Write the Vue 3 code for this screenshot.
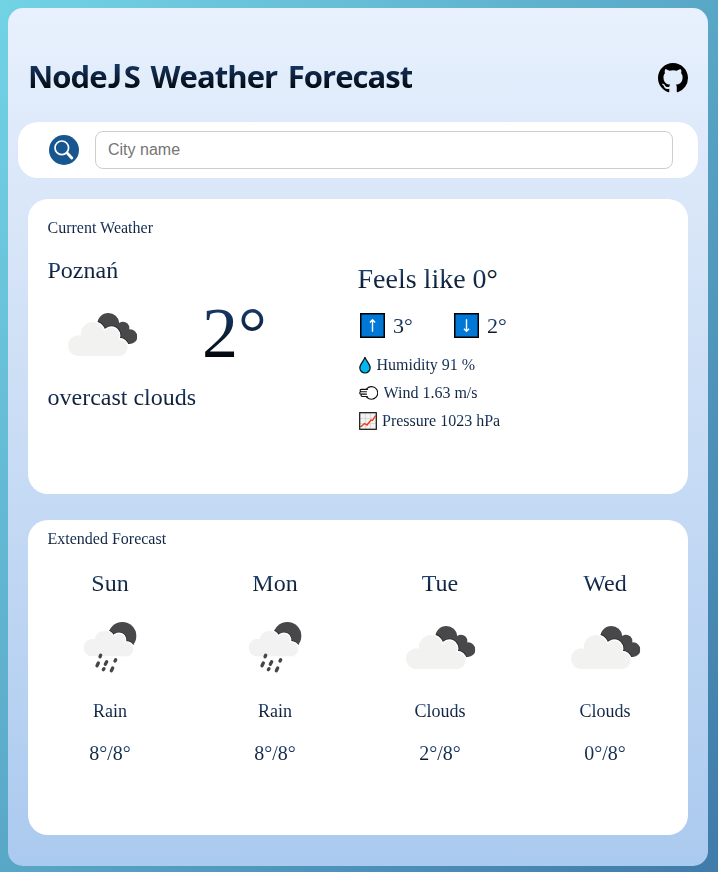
<script setup>
const days = [
  { name: 'Sun', icon: 'rain', text: 'Rain', temp: '8°/8°' },
  { name: 'Mon', icon: 'rain', text: 'Rain', temp: '8°/8°' },
  { name: 'Tue', icon: 'clouds', text: 'Clouds', temp: '2°/8°' },
  { name: 'Wed', icon: 'clouds', text: 'Clouds', temp: '0°/8°' },
]
</script>

<template>
  <div class="page">
    <svg class="sprite" width="0" height="0" aria-hidden="true">
      <defs>
        <clipPath id="dark-cloud">
          <circle cx="144" cy="72" r="33" />
          <circle cx="188" cy="84" r="19" />
          <circle cx="209" cy="110" r="22" />
          <path d="M118 60L144 50L188 75L212 105L205 132L150 120Z" />
        </clipPath>
        <clipPath id="dark-sun"><circle cx="141" cy="228" r="42" /></clipPath>
        <path id="front-cloud" d="M54 168A31 31 0 1 1 62 107A35 35 0 0 1 132 96A22 22 0 0 1 174 117A25 25 0 1 1 178 168Z" />
        <path id="rain-cloud" d="M53 289A26 26 0 1 1 58 238A30 30 0 0 1 115 231A18 18 0 0 1 147 248A21 21 0 1 1 150 289Z" />
        <symbol id="clouds" viewBox="-25 -48 300 300">
          <g clip-path="url(#dark-cloud)">
            <rect x="100" y="30" width="140" height="110" fill="#48484a" />
            <use href="#front-cloud" fill="none" stroke="#2a2a2c" stroke-width="13" />
          </g>
          <use href="#front-cloud" fill="#fff" stroke="#fff" stroke-width="8" />
          <use href="#front-cloud" fill="#f2f2f1" />
        </symbol>
        <symbol id="rain" viewBox="-46 111 300 300">
          <g clip-path="url(#dark-sun)">
            <rect x="90" y="180" width="100" height="100" fill="#48484a" />
            <use href="#rain-cloud" fill="none" stroke="#2a2a2c" stroke-width="12" />
          </g>
          <use href="#rain-cloud" fill="#fff" stroke="#fff" stroke-width="8" />
          <use href="#rain-cloud" fill="#f2f2f2" />
          <path d="M76 286l-2 4M69 309l-4 8M94 305l-4 8M121 299l-2 4M86 326l-2 3M112 324l-4 8" fill="none" stroke="#454547" stroke-width="10" stroke-linecap="round" />
        </symbol>
      </defs>
    </svg>

    <main class="panel">
      <header class="header">
        <h1 class="title ink">Node<span class="cap">J</span>S Weather Forecast</h1>
        <svg class="github" viewBox="0 0 16 16"><path d="M8 0C3.58 0 0 3.58 0 8c0 3.54 2.29 6.53 5.47 7.59.4.07.55-.17.55-.38 0-.19-.01-.82-.01-1.49-2.01.37-2.53-.49-2.69-.94-.09-.23-.48-.94-.82-1.13-.28-.15-.68-.52-.01-.53.63-.01 1.08.58 1.23.82.72 1.21 1.87.87 2.33.66.07-.52.28-.87.51-1.07-1.78-.2-3.64-.89-3.64-3.95 0-.87.31-1.59.82-2.15-.08-.2-.36-1.02.08-2.12 0 0 .67-.21 2.2.82.64-.18 1.32-.27 2-.27s1.36.09 2 .27c1.53-1.04 2.2-.82 2.2-.82.44 1.1.16 1.92.08 2.12.51.56.82 1.27.82 2.15 0 3.07-1.87 3.75-3.65 3.95.29.25.54.73.54 1.48 0 1.07-.01 1.93-.01 2.2 0 .21.15.46.55.38A8.01 8.01 0 0 0 16 8c0-4.42-3.58-8-8-8z" /></svg>
      </header>

      <form class="search" @submit.prevent>
        <svg class="search-icon" viewBox="0 0 30 30">
          <circle cx="15" cy="15" r="15" fill="#17568f" />
          <circle cx="12.8" cy="12.8" r="6.8" fill="none" stroke="#fff" stroke-width="1.7" />
          <path d="M17 17L19 19" stroke="#fff" stroke-width="1.7" />
          <path d="M18.6 18.6L22.8 23" stroke="#fff" stroke-width="2.9" stroke-linecap="round" />
        </svg>
        <input class="search-input" type="text" placeholder="City name" />
      </form>

      <section class="card current">
        <div class="now">
          <div class="label ink">Current Weather</div>
          <div class="city ink">Poznań</div>
          <div class="reading">
            <svg class="weather"><use href="#clouds" /></svg>
            <div class="degrees ink">2°</div>
          </div>
          <div class="summary ink">overcast clouds</div>
        </div>
        <div class="details">
          <div class="feels"><span class="ink">Feels like 0</span><span class="deg">°</span></div>
          <div class="range">
            <div class="limit">
              <svg class="arrow" viewBox="0 0 25 25"><rect x=".75" y=".75" width="23.5" height="23.5" fill="#0078d7" stroke="#000" stroke-width="1.5" /><path d="M12.5 18.8V6.8M9.9 9.4l2.6-2.6 2.6 2.6" fill="none" stroke="#fff" stroke-width="1.4" /></svg>
              <span class="ink">3°</span>
            </div>
            <div class="limit">
              <svg class="arrow" viewBox="0 0 25 25"><rect x=".75" y=".75" width="23.5" height="23.5" fill="#0078d7" stroke="#000" stroke-width="1.5" /><path d="M12.5 6.2v12M9.9 15.7l2.6 2.6 2.6-2.6" fill="none" stroke="#fff" stroke-width="1.4" /></svg>
              <span class="ink">2°</span>
            </div>
          </div>
          <div class="metric humidity">
            <svg width="12" height="18" viewBox="0 0 12 18"><path d="M6 1.2C5.3 4.5.8 8 .8 11.8a5.2 5.2 0 0 0 10.4 0C11.2 8 6.7 4.5 6 1.2z" fill="#00b7f0" stroke="#111" stroke-width="1.2" /></svg>
            <span class="ink">Humidity 91 %</span>
          </div>
          <div class="metric wind">
            <svg width="19" height="16" viewBox="0 0 19 16" fill="none" stroke="#111" stroke-width="1.15" stroke-linecap="round" stroke-linejoin="round"><path d="M7.5 4A6.3 6.3 0 1 1 8 12.4" /><path d="M8.5 4.3H2.3a1.2 1.2 0 0 0 0 2.4H1.9a1.2 1.2 0 0 0 0 2.4H3.2a1.2 1.2 0 0 0 0 2.4H7.5q2 0 .5 1.2M2.3 6.7H7.5M3.2 9.1H7.5" /></svg>
            <span class="ink">Wind 1.63 m/s</span>
          </div>
          <div class="metric pressure">
            <svg width="18" height="18" viewBox="0 0 18 18"><rect x="1" y="1" width="16" height="16" fill="#f3f3f3" /><path d="M6.5 1v16M11.5 1v16M1 6.5h16M1 11.5h16" stroke="#d2d2d2" stroke-width=".8" /><path d="M1.5 15L5.5 11.5L8 13L12 8L13.5 8.5L16.5 3.5" fill="none" stroke="#f03a17" stroke-width="1.4" /><rect x=".7" y=".7" width="16.6" height="16.6" fill="none" stroke="#111" stroke-width="1.2" /></svg>
            <span class="ink">Pressure 1023 hPa</span>
          </div>
        </div>
      </section>

      <section class="card extended">
        <div class="label ink">Extended Forecast</div>
        <div class="days">
          <div v-for="day in days" :key="day.name" class="day">
            <div class="day-name ink">{{ day.name }}</div>
            <svg class="weather"><use :href="'#' + day.icon" /></svg>
            <div class="day-text ink">{{ day.text }}</div>
            <div class="day-temp ink">{{ day.temp }}</div>
          </div>
        </div>
      </section>
    </main>
  </div>
</template>

<style>
body {
  margin: 0;
}
</style>

<style scoped>
.page {
  box-sizing: border-box;
  height: 872px;
  padding: 8px 10px 6px 8px;
  background: linear-gradient(to bottom right, #72d3e5, #407ba9);
  font-family: "Liberation Serif", "Times New Roman", serif;
}
.sprite {
  position: absolute;
}
.panel {
  box-sizing: border-box;
  height: 858px;
  border-radius: 15px;
  padding: 0 10px;
  background: linear-gradient(#e8f1fd, #deeafb 14%, #dae7f8 22%, #abcaef);
}
.ink {
  width: fit-content;
  background: linear-gradient(#25508a, #040810);
  -webkit-background-clip: text;
  background-clip: text;
  color: transparent;
}
.degrees.ink,
.title.ink {
  background-image: linear-gradient(#1e4b87, #000 88%);
}
.header {
  display: flex;
  justify-content: space-between;
  height: 114px;
  padding: 0 10px;
}
.title {
  margin: 46px 0 0;
  font: 700 31px/44px "Open Sans", "Noto Sans", sans-serif;
  height: 44px;
  letter-spacing: -0.95px;
  word-spacing: 3.5px;
  white-space: nowrap;
}
.cap {
  margin-left: 1.5px;
  font-family: Lato, sans-serif;
  font-size: 32px;
  font-weight: 900;
  letter-spacing: 2px;
}
.github {
  width: 30px;
  height: 30px;
  margin-top: 55px;
}
.search {
  box-sizing: border-box;
  display: flex;
  align-items: center;
  gap: 16px;
  height: 56px;
  padding: 0 25px 0 31px;
  border-radius: 20px;
  background: #fff;
}
.search-icon {
  flex: none;
  width: 30px;
  height: 30px;
}
.search-input {
  box-sizing: border-box;
  flex: 1;
  height: 38px;
  padding: 0 12px;
  border: 1px solid #ccced6;
  border-radius: 8px;
  background: #fff;
  font: 16px "Liberation Sans", Arial, sans-serif;
}
.search-input::placeholder {
  color: #757575;
}
.card {
  box-sizing: border-box;
  margin: 0 10px;
  border-radius: 20px;
  background: #fff;
}
.current {
  display: grid;
  grid-template-columns: 310px 1fr;
  height: 295px;
  margin-top: 21px;
  padding: 20px 20.5px 0 19.5px;
}
.label {
  font-size: 16px;
  line-height: 18px;
}
.city {
  margin-top: 19px;
  font-size: 24px;
  line-height: 28px;
}
.reading {
  display: flex;
  height: 100px;
  padding-left: 4.5px;
}
.weather {
  display: block;
  width: 100px;
  height: 100px;
}
.degrees {
  margin: 9px 0 0 50px;
  height: 80px;
  font-size: 72px;
  line-height: 80px;
}
.summary {
  margin-top: -1px;
  font-size: 24px;
  line-height: 28px;
}
.feels {
  display: flex;
  margin-top: 44px;
  font-size: 28px;
  line-height: 32px;
}
.deg {
  color: #0a1526;
}
.range {
  display: flex;
  margin: 18px 0 0 2.5px;
}
.limit {
  display: flex;
  align-items: center;
  gap: 8px;
  width: 94px;
  height: 25px;
  font-size: 22px;
  line-height: 26px;
}
.arrow {
  width: 25px;
  height: 25px;
}
.metric {
  display: flex;
  align-items: center;
  height: 28px;
  font-size: 16px;
  line-height: 18px;
}
.humidity {
  gap: 6px;
  margin-top: 13px;
  padding-left: 1px;
}
.wind {
  gap: 6px;
  padding-left: 1px;
}
.pressure {
  gap: 5.5px;
  padding-left: 1px;
}
.extended {
  height: 315px;
  margin-top: 26px;
  padding-top: 10px;
}
.extended .label {
  margin-left: 19.5px;
}
.days {
  display: grid;
  grid-template-columns: repeat(4, 165px);
  margin: 22px 0 0 -0.5px;
}
.day {
  display: flex;
  flex-direction: column;
  align-items: center;
}
.day-name {
  font-size: 24px;
  line-height: 27px;
}
.day-text {
  margin-top: 4px;
  font-size: 18px;
  line-height: 20px;
}
.day-temp {
  margin-top: 21px;
  font-size: 20px;
  line-height: 23px;
}
</style>
